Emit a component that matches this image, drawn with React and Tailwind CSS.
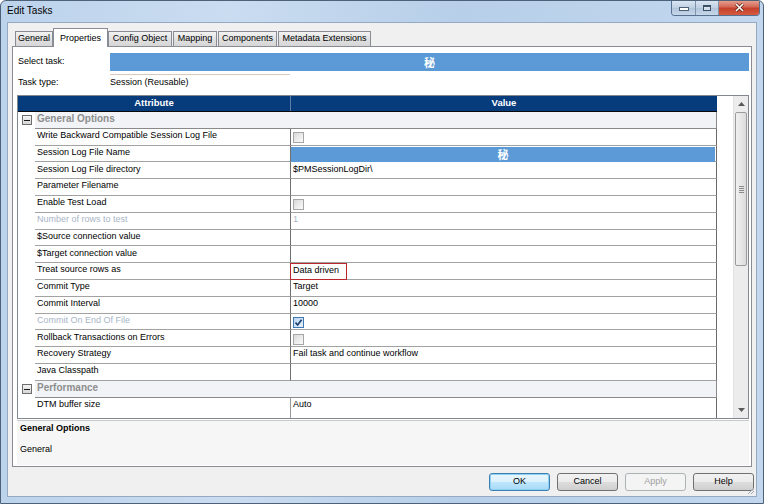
import React from "react";

const rows = [
  { group: "General Options" },
  { label: "Write Backward Compatible Session Log File", cb: "off" },
  { label: "Session Log File Name", blue: true },
  { label: "Session Log File directory", value: "$PMSessionLogDir\\" },
  { label: "Parameter Filename" },
  { label: "Enable Test Load", cb: "off" },
  { label: "Number of rows to test", value: "1", disabled: true },
  { label: "$Source connection value" },
  { label: "$Target connection value" },
  { label: "Treat source rows as", value: "Data driven", boxed: true },
  { label: "Commit Type", value: "Target" },
  { label: "Commit Interval", value: "10000" },
  { label: "Commit On End Of File", cb: "on", disabled: true },
  { label: "Rollback Transactions on Errors", cb: "off" },
  { label: "Recovery Strategy", value: "Fail task and continue workflow" },
  { label: "Java Classpath" },
  { group: "Performance" },
  { label: "DTM buffer size", value: "Auto", last: true },
];

function Check({ on }) {
  if (on) {
    return (
      <div className="w-[11px] h-[11px] border border-[#3f78b3] bg-[linear-gradient(135deg,#bcd6f1,#e6f0fb)] flex items-center justify-center">
        <svg width="9" height="9" viewBox="0 0 9 9">
          <path d="M1.5 4.5 L3.6 7 L7.6 1.8" fill="none" stroke="#1b3e70" strokeWidth="1.7" />
        </svg>
      </div>
    );
  }
  return <div className="w-[11px] h-[11px] border border-[#a6a6a6] bg-[linear-gradient(135deg,#d9d9d9,#fbfbfb)]" />;
}

function Glyph() {
  return (
    <span className="text-white font-bold text-[11px] leading-none font-['Noto_Sans_CJK_SC',sans-serif]">秘</span>
  );
}

function Row({ r }) {
  if (r.group) {
    return (
      <div className="flex h-[16.8px] shrink-0">
        <div className="w-[17px] flex items-center justify-center bg-white">
          <div className="w-[10px] h-[10px] border border-[#6e6e6e] bg-[linear-gradient(180deg,#f4f4f4,#d6d6d6)] flex items-center justify-center">
            <div className="w-[6px] h-[1px] bg-[#1a1a1a]" />
          </div>
        </div>
        <div className="flex-1 bg-[#f1f3f6] border-b border-r border-[#8a8a8a] flex items-center pl-[2px] pb-[3px] text-[10px] font-bold text-[#8e8e8e]">
          {r.group}
        </div>
      </div>
    );
  }
  const txt = r.disabled ? "text-[#a9b5c7]" : "text-black";
  return (
    <div className={`flex ${r.last ? "flex-1 min-h-[16.8px] items-start" : "h-[16.8px] shrink-0"}`}>
      <div className="w-[17px] self-stretch bg-white" />
      <div className={`w-[255px] ${r.last ? "h-[16.8px]" : "border-b"} border-[#a2a2a2] flex items-center pl-[2px] pb-[2px] text-[9px] ${txt}`}>
        {r.label}
      </div>
      <div className={`flex-1 self-stretch border-l border-r ${r.last ? "border-l-[#9a9a9a]" : "border-b border-l-[#707070]"} border-r-[#6a6a6a] border-b-[#a2a2a2] relative flex ${r.last ? "items-start" : "items-center pb-[2px]"} pl-[2px] text-[9px] ${txt}`}>
        {r.cb && <div className="mt-[4px]"><Check on={r.cb === "on"} /></div>}
        {r.value && !r.boxed && !r.last && <span>{r.value}</span>}
        {r.last && (
          <div className="h-[16.8px] flex items-center pb-[2px]">{r.value}</div>
        )}
        {r.boxed && (
          <div className="absolute -left-px top-0 -bottom-px w-[57px] border border-[#b9262e] flex items-center pl-[2px] pb-[2px]">
            {r.value}
          </div>
        )}
        {r.blue && (
          <div className="absolute left-0 top-px w-[424px] h-[15px] bg-[#5b9ad6] flex items-center justify-center">
            <Glyph />
          </div>
        )}
      </div>
    </div>
  );
}

function Tab({ label, w, active, ml }) {
  if (active) {
    return (
      <div
        className={`${ml} ${w} h-[19px] -mb-px relative z-10 bg-white border border-b-0 border-[#898c95] flex items-start justify-center pt-[3px] text-[9px]`}
      >
        {label}
      </div>
    );
  }
  return (
    <div
      className={`${ml} ${w} h-[15px] bg-[linear-gradient(180deg,#f3f3f3,#e1e1e1_50%,#d6d6d6)] border border-b-0 border-[#898c95] flex items-center justify-center text-[9px]`}
    >
      {label}
    </div>
  );
}

function Btn({ children, kind }) {
  let cls =
    "border-[#707070] bg-[linear-gradient(180deg,#f2f2f2,#ebebeb_50%,#dddddd_51%,#cfcfcf)] text-black";
  if (kind === "ok")
    cls = "border-[#3c7fb1] bg-[linear-gradient(180deg,#eaf6fd,#d9f0fc_50%,#bee6fd_51%,#a7d9f5)] text-black shadow-[inset_0_0_0_1px_#8fd1f5]";
  if (kind === "dis") cls = "border-[#adb2b5] bg-[#f4f4f4] text-[#a0a0a0]";
  return (
    <div className={`w-[61px] h-[18px] rounded-[3px] border ${cls} flex items-center justify-center text-[9px]`}>
      {children}
    </div>
  );
}

export default function App() {
  return (
    <div className="w-[764px] h-[504px] flex flex-col overflow-hidden border border-[#4d6279] rounded-t-[6px] bg-[linear-gradient(90deg,#bcd3ec,#cadcf0_30%,#b7cfe9_60%,#c2d7ee)] font-['Liberation_Sans',Arial,sans-serif] text-black relative">
      {/* Title bar */}
      <div className="h-[21px] flex items-start justify-between shrink-0">
        <div className="pl-[6px] pt-[4px] text-[10px] leading-[12px] text-black">Edit Tasks</div>
        <div className="mr-[3px] -mt-px flex h-[16px] rounded-b-[4px] border border-t-0 border-[#56708f] overflow-hidden">
          <div className="w-[24px] bg-[linear-gradient(180deg,#dde8f3,#c0d1e4_50%,#aec3da_51%,#c7d7e8)] border-r border-[#7f93ab] flex items-end justify-center pb-[4px]">
            <div className="w-[8px] h-[2px] bg-white border border-[#4e5f75] box-content" />
          </div>
          <div className="w-[23px] bg-[linear-gradient(180deg,#dde8f3,#c0d1e4_50%,#aec3da_51%,#c7d7e8)] border-r border-[#7f93ab] flex items-center justify-center">
            <div className="w-[8px] h-[6px] border-[1.5px] border-t-[2.5px] border-[#3f4f63] bg-white/40" />
          </div>
          <div className="w-[40px] bg-[linear-gradient(180deg,#e8a596,#d56a57_45%,#c4402b_55%,#d65a3f)] flex items-center justify-center">
            <svg width="11" height="9" viewBox="0 0 11 9">
              <path d="M2 1 L9 8 M9 1 L2 8" stroke="#5a1c10" strokeWidth="3" />
              <path d="M2 1 L9 8 M9 1 L2 8" stroke="#ffffff" strokeWidth="1.6" />
            </svg>
          </div>
        </div>
      </div>

      {/* Frame body */}
      <div className="flex-1 px-[6px] pb-[6px] flex">
        <div className="flex-1 bg-[#f0f0f0] border border-[#95a9c2] flex flex-col relative">
          {/* Tabs */}
          <div className="flex items-end pt-[5px] pl-[7px] h-[23px] shrink-0">
            <Tab label="General" w="w-[38px]" ml="" />
            <Tab label="Properties" w="w-[55px]" active ml="" />
            <Tab label="Config Object" w="w-[64px]" ml="" />
            <Tab label="Mapping" w="w-[44px]" ml="ml-[1px]" />
            <Tab label="Components" w="w-[59px]" ml="ml-[1px]" />
            <Tab label="Metadata Extensions" w="w-[93px]" ml="ml-[1px]" />
          </div>

          {/* Tab panel */}
          <div className="ml-[4px] mr-[4px] bg-white border border-[#898c95] pl-[4px] pr-[2px] pt-[6px] pb-[1px] flex flex-col">
            <div className="flex items-center h-[18px]">
              <div className="w-[93px] pl-[1px] text-[9px]">Select task:</div>
              <div className="flex-1 h-[18px] bg-[#5b9ad6] flex items-center justify-center">
                <Glyph />
              </div>
            </div>
            <div className="flex items-center h-[17px] mt-[3px]">
              <div className="w-[93px] pl-[1px] text-[9px]">Task type:</div>
              <div className="w-[180px] h-[17px] border-t border-[#d9cabd] flex items-center text-[9px]">
                Session (Reusable)
              </div>
            </div>

            {/* Grid */}
            <div className="mt-[4px] h-[324px] border border-[#828790] flex bg-white overflow-hidden">
              <div className="w-[699px] flex flex-col overflow-hidden">
                <div className="h-[16px] shrink-0 flex bg-[#063b7c] border-b border-[#0a0a0a]">
                  <div className="w-[273px] border-r border-[#5f7ea6] flex items-center justify-center text-white font-bold text-[9.5px]">
                    Attribute
                  </div>
                  <div className="flex-1 flex items-center justify-center text-white font-bold text-[9.5px]">
                    Value
                  </div>
                </div>
                {rows.map((r, i) => (
                  <Row key={i} r={r} />
                ))}
              </div>
              <div className="flex-1" />
              {/* Scrollbar */}
              <div className="w-[15px] flex flex-col bg-[#ececec] border-l border-[#e2e2e2]">
                <div className="h-[16px] flex items-center justify-center shrink-0">
                  <svg width="7" height="4" viewBox="0 0 7 4">
                    <path d="M0 4 L3.5 0 L7 4 Z" fill="#5a5a5a" />
                  </svg>
                </div>
                <div className="h-[154px] mx-[1px] rounded-[2px] border border-[#9b9b9b] bg-[linear-gradient(90deg,#f1f1f1,#dcdcdc)] flex flex-col items-center justify-center gap-[1px] shrink-0">
                  <div className="w-[5px] h-px bg-[#8a8a8a]" />
                  <div className="w-[5px] h-px bg-[#8a8a8a]" />
                  <div className="w-[5px] h-px bg-[#8a8a8a]" />
                  <div className="w-[5px] h-px bg-[#8a8a8a]" />
                </div>
                <div className="flex-1" />
                <div className="h-[16px] flex items-center justify-center shrink-0">
                  <svg width="7" height="4" viewBox="0 0 7 4">
                    <path d="M0 0 L3.5 4 L7 0 Z" fill="#5a5a5a" />
                  </svg>
                </div>
              </div>
            </div>

            {/* Description */}
            <div className="mt-[1px] h-[45px] bg-[#f6f6f6] border-t border-[#c9c9c9] px-[3px] pt-[2px] flex flex-col">
              <div className="text-[9px] font-bold leading-[11px]">General Options</div>
              <div className="text-[9px] leading-[11px] mt-[10px]">General</div>
            </div>
          </div>

          {/* Buttons */}
          <div className="flex justify-end gap-[7px] pr-[2px] pt-[6px]">
            <Btn kind="ok">OK</Btn>
            <Btn>Cancel</Btn>
            <Btn kind="dis">Apply</Btn>
            <Btn>Help</Btn>
          </div>

          {/* Resize grip */}
          <div className="absolute right-[1px] bottom-[1px]">
            <svg width="9" height="9" viewBox="0 0 9 9">
              <path d="M8 2 L2 8 M8 5 L5 8" stroke="#a0a8b4" strokeWidth="1" />
            </svg>
          </div>
        </div>
      </div>
    </div>
  );
}
